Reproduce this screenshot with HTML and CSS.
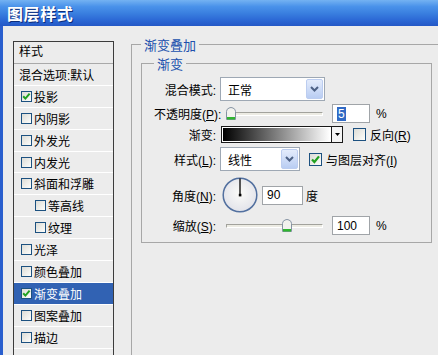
FILE: index.html
```html
<!DOCTYPE html>
<html lang="zh">
<head>
<meta charset="utf-8">
<title>图层样式</title>
<link rel="stylesheet" href="styles.css">
</head>
<body>
<div class="titlebar"><span class="title">图层样式</span></div>
<div class="main">
  <div class="sidebar">
    <div class="list">
      <div class="list-head">样式</div>
      <div class="item plain">混合选项:默认</div>
      <div class="item"><span class="cb on"><svg viewBox="0 0 11 11" width="11" height="11"><polyline points="2.2,5.2 4.4,7.6 8.6,2.6" fill="none" stroke="#21a121" stroke-width="2"/></svg></span>投影</div>
      <div class="item"><span class="cb"></span>内阴影</div>
      <div class="item"><span class="cb"></span>外发光</div>
      <div class="item"><span class="cb"></span>内发光</div>
      <div class="item"><span class="cb"></span>斜面和浮雕</div>
      <div class="item sub"><span class="cb"></span>等高线</div>
      <div class="item sub"><span class="cb"></span>纹理</div>
      <div class="item"><span class="cb"></span>光泽</div>
      <div class="item"><span class="cb"></span>颜色叠加</div>
      <div class="item selected"><span class="cb on"><svg viewBox="0 0 11 11" width="11" height="11"><polyline points="2.2,5.2 4.4,7.6 8.6,2.6" fill="none" stroke="#21a121" stroke-width="2"/></svg></span>渐变叠加</div>
      <div class="item"><span class="cb"></span>图案叠加</div>
      <div class="item"><span class="cb"></span>描边</div>
    </div>
  </div>
  <div class="panel">
    <fieldset class="group outer">
      <legend>渐变叠加</legend>
      <fieldset class="group inner">
        <legend>渐变</legend>
        <div class="row r1">
          <span class="lbl">混合模式:</span>
          <div class="select w-mode"><span class="val">正常</span><span class="btn"><svg viewBox="0 0 9 6" width="9" height="6"><polyline points="1,1 4.5,4.5 8,1" fill="none" stroke="#4d6185" stroke-width="2"/></svg></span></div>
        </div>
        <div class="row r2">
          <span class="lbl">不透明度(<u>P</u>):</span>
          <div class="slider">
            <div class="track"></div>
            <svg class="thumb" style="left:6px" viewBox="0 0 10 13" width="10" height="13"><path d="M0.5 12.5 V4.5 Q0.5 2 3 1 L5 0.5 L7 1 Q9.5 2 9.5 4.5 V12.5 Z" fill="#f2f2ee" stroke="#8593a3"/><rect x="1" y="10" width="8" height="2.5" fill="#2fb52f"/></svg>
          </div>
          <div class="field w-num"><span class="sel">5</span></div>
          <span class="unit">%</span>
        </div>
        <div class="row r3">
          <span class="lbl">渐变:</span>
          <div class="grad"><div class="grad-fill"></div><div class="grad-btn"><svg viewBox="0 0 5 3" width="5" height="3"><polygon points="0,0 5,0 2.5,3" fill="#000"/></svg></div></div>
          <span class="cb big"></span>
          <span class="cbtext">反向(<u>R</u>)</span>
        </div>
        <div class="row r4">
          <span class="lbl">样式(<u>L</u>):</span>
          <div class="select w-style"><span class="val">线性</span><span class="btn"><svg viewBox="0 0 9 6" width="9" height="6"><polyline points="1,1 4.5,4.5 8,1" fill="none" stroke="#4d6185" stroke-width="2"/></svg></span></div>
          <span class="cb big on"><svg viewBox="0 0 13 13" width="13" height="13"><polyline points="3,6.4 5.4,9 10,3.4" fill="none" stroke="#21a121" stroke-width="2.2"/></svg></span>
          <span class="cbtext">与图层对齐(<u>I</u>)</span>
        </div>
        <div class="row r5">
          <span class="lbl">角度(<u>N</u>):</span>
          <svg class="dial" viewBox="0 0 36 36" width="36" height="36">
            <defs><radialGradient id="dg" cx="50%" cy="45%" r="55%"><stop offset="0" stop-color="#fbfbf8"/><stop offset="1" stop-color="#e2e3ea"/></radialGradient></defs>
            <circle cx="18" cy="18" r="16.8" fill="url(#dg)" stroke="#52709f" stroke-width="1.5"/>
            <line x1="18" y1="18" x2="18" y2="1.5" stroke="#000" stroke-width="1.3"/>
            <rect x="16.8" y="16.8" width="2.6" height="2.6" fill="#000"/>
          </svg>
          <div class="field w-angle">90</div>
          <span class="unit deg">度</span>
        </div>
        <div class="row r6">
          <span class="lbl">缩放(<u>S</u>):</span>
          <div class="slider">
            <div class="track"></div>
            <svg class="thumb" style="left:62px" viewBox="0 0 10 13" width="10" height="13"><path d="M0.5 12.5 V4.5 Q0.5 2 3 1 L5 0.5 L7 1 Q9.5 2 9.5 4.5 V12.5 Z" fill="#f2f2ee" stroke="#8593a3"/><rect x="1" y="10" width="8" height="2.5" fill="#2fb52f"/></svg>
          </div>
          <div class="field w-num">100</div>
          <span class="unit">%</span>
        </div>
      </fieldset>
    </fieldset>
  </div>
</div>
</body>
</html>
```

FILE: styles.css
```css
* { box-sizing: border-box; }
html, body { margin: 0; padding: 0; }
body {
  width: 438px;
  height: 355px;
  overflow: hidden;
  background: #ececec;
  font-family: "Liberation Sans", "Noto Sans CJK SC", sans-serif;
  font-size: 12px;
  color: #000;
}
.titlebar {
  height: 26px;
  background: linear-gradient(#74b2f2 0%, #4a92ea 25%, #3a80e0 50%, #2d6ad6 75%, #2458c6 100%);
  padding-left: 7px;
  display: flex;
  align-items: center;
}
.title {
  color: #fff;
  font-family: "Noto Sans CJK SC", sans-serif;
  font-weight: bold;
  font-size: 16px;
  letter-spacing: 0.6px;
  line-height: 20px;
  text-shadow: 1px 1px 0 #0c2d7a;
}
.main {
  display: flex;
  height: 329px;
  border-left: 3px solid #2a5fce;
}
.sidebar {
  padding: 15px 0 0 10px;
  flex-shrink: 0;
}
.list {
  width: 101px;
  height: 100%;
  border: 1px solid #3c3c3c;
  border-bottom: none;
  display: flex;
  flex-direction: column;
}
.list-head {
  height: 22px;
  line-height: 21px;
  padding-left: 5px;
  border-bottom: 1px solid #a9a9a9;
}
.item {
  height: 21.9px;
  border-bottom: 1px solid #fff;
  display: flex;
  align-items: center;
  padding-left: 7px;
  flex-shrink: 0;
}
.item.plain { padding-left: 5px; }
.item.sub { padding-left: 21px; }
.item.selected { background: #3162b3; color: #fff; }
.cb {
  width: 11px;
  height: 11px;
  border: 1px solid #1c5180;
  background: linear-gradient(135deg, #dcdcd6, #fdfdfb);
  margin-right: 2px;
  display: inline-flex;
  align-items: center;
  justify-content: center;
  flex-shrink: 0;
}
.cb svg { display: block; margin: -1px; }
.cb.big { width: 13px; height: 13px; }
.panel {
  padding: 11px 0 0 17px;
  flex-shrink: 0;
}
.group {
  margin: 0;
  border: 1px solid #a7a7a7;
  min-width: 0;
}
.group legend {
  color: #2050ac;
  font-family: "Noto Sans CJK SC", sans-serif;
  font-size: 13px;
  line-height: 15px;
  padding: 0 3px;
}
.outer {
  width: 312px;
  height: 330px;
  padding: 4px 0 0 9px;
}
.inner {
  width: 291px;
  padding: 0 0 7px 12px;
}
.row {
  display: flex;
  align-items: center;
}
.lbl {
  width: 62px;
  text-align: right;
  margin-right: 4px;
  white-space: nowrap;
  flex-shrink: 0;
}
.r1 { height: 24px; margin-top: 6px; }
.r2 { height: 19px; margin-top: 3px; }
.r3 { height: 17px; margin-top: 3px; }
.r4 { height: 24px; margin-top: 4px; }
.r5 { height: 36px; margin-top: 6px; }
.r6 { height: 19px; margin-top: 3px; }
.select {
  height: 24px;
  border: 1px solid #9ea8b4;
  background: #fff;
  display: flex;
  align-items: center;
  padding: 1px;
}
.select .val { flex: 1; padding-left: 6px; }
.select .btn {
  width: 17px;
  height: 20px;
  border: 1px solid #bccdf0;
  border-radius: 2px;
  background: linear-gradient(#e4ecfc, #b9cdf3);
  display: flex;
  align-items: center;
  justify-content: center;
}
.w-mode { width: 105px; }
.w-style { width: 80px; margin-right: 9px; }
.slider {
  position: relative;
  width: 103px;
  height: 19px;
  margin-right: 9px;
}
.track {
  position: absolute;
  left: 6px;
  right: 0;
  top: 8px;
  height: 4px;
  border-top: 1px solid #a2a29c;
  border-left: 1px solid #a2a29c;
  border-bottom: 1px solid #fff;
  border-right: 1px solid #fff;
  background: #ecebe3;
}
.thumb { position: absolute; top: 3px; }
.field {
  height: 19px;
  border: 1px solid #a0a4a8;
  background: #fff;
  display: flex;
  align-items: center;
  padding-left: 4px;
}
.w-num { width: 38px; }
.w-angle { width: 41px; }
.sel { background: #316ac5; color: #fff; padding: 0 1px; line-height: 14px; }
.unit { margin-left: 6px; }
.unit.deg { margin-left: 3px; }
.grad {
  width: 122px;
  height: 17px;
  margin-left: 1px;
  margin-right: 10px;
  border: 1px solid #1a1a1a;
  display: flex;
}
.grad-fill {
  flex: 1;
  border: 1px solid #fff;
  background: linear-gradient(to right, #000, #fff);
}
.grad-btn {
  width: 11px;
  border-left: 1px solid #1a1a1a;
  background: #f4f4f4;
  display: flex;
  align-items: center;
  justify-content: center;
}
.cbtext { margin-left: 2px; white-space: nowrap; }
.dial { margin-left: 2px; margin-right: 4px; display: block; }
```
